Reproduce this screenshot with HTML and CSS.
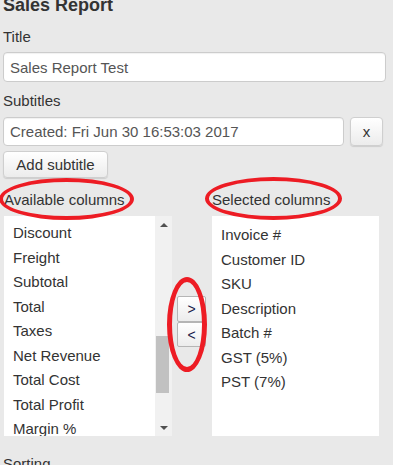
FILE: index.html
```html
<!DOCTYPE html>
<html lang="en">
<head>
    <meta charset="UTF-8">
    <meta name="viewport" content="width=device-width, initial-scale=1.0">
    <title>Sales Report</title>
    <link rel="stylesheet" href="styles.css">
</head>
<body>
    <div class="page">
        <h2 class="report-title">Sales Report</h2>

        <div class="field-label">Title</div>
        <input class="text-input title-input" type="text" value="Sales Report Test">

        <div class="field-label subtitles-label">Subtitles</div>
        <div class="subtitle-row">
            <input class="text-input" type="text" value="Created: Fri Jun 30 16:53:03 2017">
            <button class="btn btn-remove">x</button>
        </div>
        <button class="btn btn-add">Add subtitle</button>

        <div class="columns-picker">
            <div class="col-label marked marked-left">Available columns</div>
            <div></div>
            <div class="col-label marked marked-right">Selected columns</div>

            <div class="col-list">
                <div class="col-items">
                    <div class="col-item">Discount</div>
                    <div class="col-item">Freight</div>
                    <div class="col-item">Subtotal</div>
                    <div class="col-item">Total</div>
                    <div class="col-item">Taxes</div>
                    <div class="col-item">Net Revenue</div>
                    <div class="col-item">Total Cost</div>
                    <div class="col-item">Total Profit</div>
                    <div class="col-item">Margin %</div>
                </div>
                <div class="scrollbar">
                    <div class="scroll-arrow"><span class="arrow-up"></span></div>
                    <div class="scroll-track"><div class="scroll-thumb"></div></div>
                    <div class="scroll-arrow"><span class="arrow-down"></span></div>
                </div>
            </div>

            <div class="move-btns marked">
                <button class="btn btn-move">&gt;</button>
                <button class="btn btn-move">&lt;</button>
            </div>

            <div class="col-list selected-list">
                <div class="col-items">
                    <div class="col-item">Invoice #</div>
                    <div class="col-item">Customer ID</div>
                    <div class="col-item">SKU</div>
                    <div class="col-item">Description</div>
                    <div class="col-item">Batch #</div>
                    <div class="col-item">GST (5%)</div>
                    <div class="col-item">PST (7%)</div>
                </div>
            </div>
        </div>

        <div class="field-label sorting-label">Sorting</div>
    </div>
</body>
</html>
```

FILE: styles.css
```css
body {
    margin: 0;
    background-color: #e9e9e9;
    font-family: "Liberation Sans", Arial, sans-serif;
    color: #333333;
    overflow: hidden;
}

.page {
    padding: 0 3px;
}

.report-title {
    margin: -5px 0 0;
    font-size: 18px;
    line-height: 20px;
    font-weight: bold;
}

.field-label {
    margin-top: 12px;
    font-size: 15px;
    line-height: 20px;
}

.subtitles-label {
    margin-top: 9px;
}

/* inputs */
.text-input {
    display: block;
    box-sizing: border-box;
    height: 30px;
    padding: 0 6px;
    border: 1px solid #cccccc;
    border-radius: 4px;
    background-color: #ffffff;
    box-shadow: inset 0 1px 1px rgba(0,0,0,0.06);
    font-family: inherit;
    font-size: 15px;
    color: #555555;
    outline: none;
}

.title-input {
    width: 383px;
    margin-top: 5px;
}

.subtitle-row {
    display: flex;
    gap: 6px;
    margin-top: 6px;
}

.subtitle-row .text-input {
    width: 341px;
    height: 29px;
}

/* buttons */
.btn {
    box-sizing: border-box;
    border: 1px solid #cfcfcf;
    border-radius: 4px;
    background: linear-gradient(#ffffff, #ececec);
    box-shadow: 0 1px 1px rgba(0,0,0,0.12);
    font-family: inherit;
    font-size: 15px;
    color: #333333;
    padding: 0;
    cursor: pointer;
}

.btn-remove {
    width: 33px;
    height: 29px;
}

.btn-add {
    display: block;
    width: 105px;
    height: 27px;
    margin-top: 5px;
}

/* column picker */
.columns-picker {
    display: grid;
    grid-template-columns: 168px 40px 167px;
    grid-template-rows: 20px 220px;
    row-gap: 6px;
    margin: 12px 0 0 1px;
}

.col-label {
    font-size: 15px;
    line-height: 20px;
}

.marked {
    position: relative;
}

/* red hand-drawn rings */
.marked::after {
    content: "";
    position: absolute;
    box-sizing: border-box;
    border: 4px solid #ed1c24;
    border-radius: 50%;
}

.marked-left::after {
    left: -5px;
    top: -12px;
    width: 135px;
    height: 42px;
}

.marked-right::after {
    left: -7px;
    top: -13px;
    width: 137px;
    height: 43px;
}

.col-list {
    display: flex;
    background-color: #ffffff;
    overflow: hidden;
}

.col-items {
    flex: 1;
    padding: 5px 0 0 9px;
}

.selected-list .col-items {
    padding-top: 7px;
}

.col-item {
    font-size: 15px;
    line-height: 24.5px;
    white-space: nowrap;
}

.scrollbar {
    width: 17px;
    display: flex;
    flex-direction: column;
    background-color: #f1f1f1;
}

.scroll-arrow {
    height: 17px;
    display: flex;
    align-items: center;
    justify-content: center;
}

.arrow-up {
    border-left: 4px solid transparent;
    border-right: 4px solid transparent;
    border-bottom: 4px solid #505050;
}

.arrow-down {
    border-left: 4px solid transparent;
    border-right: 4px solid transparent;
    border-top: 4px solid #505050;
}

.scroll-track {
    flex: 1;
}

.scroll-thumb {
    width: 13px;
    height: 57px;
    margin: 103px 0 0 1px;
    background-color: #c1c1c1;
}

.move-btns {
    padding: 80px 0 0 5px;
}

.marked.move-btns::after {
    left: -5px;
    top: 61px;
    width: 40px;
    height: 95px;
    border-width: 5px;
}

.btn-move {
    display: block;
    width: 29px;
    height: 26px;
    border-radius: 2px;
    border-color: #b5b5b5;
    box-shadow: none;
    font-size: 14px;
    color: #1a1a4a;
}

.btn-move + .btn-move {
    height: 25px;
}

.sorting-label {
    margin-top: 18px;
}
```
